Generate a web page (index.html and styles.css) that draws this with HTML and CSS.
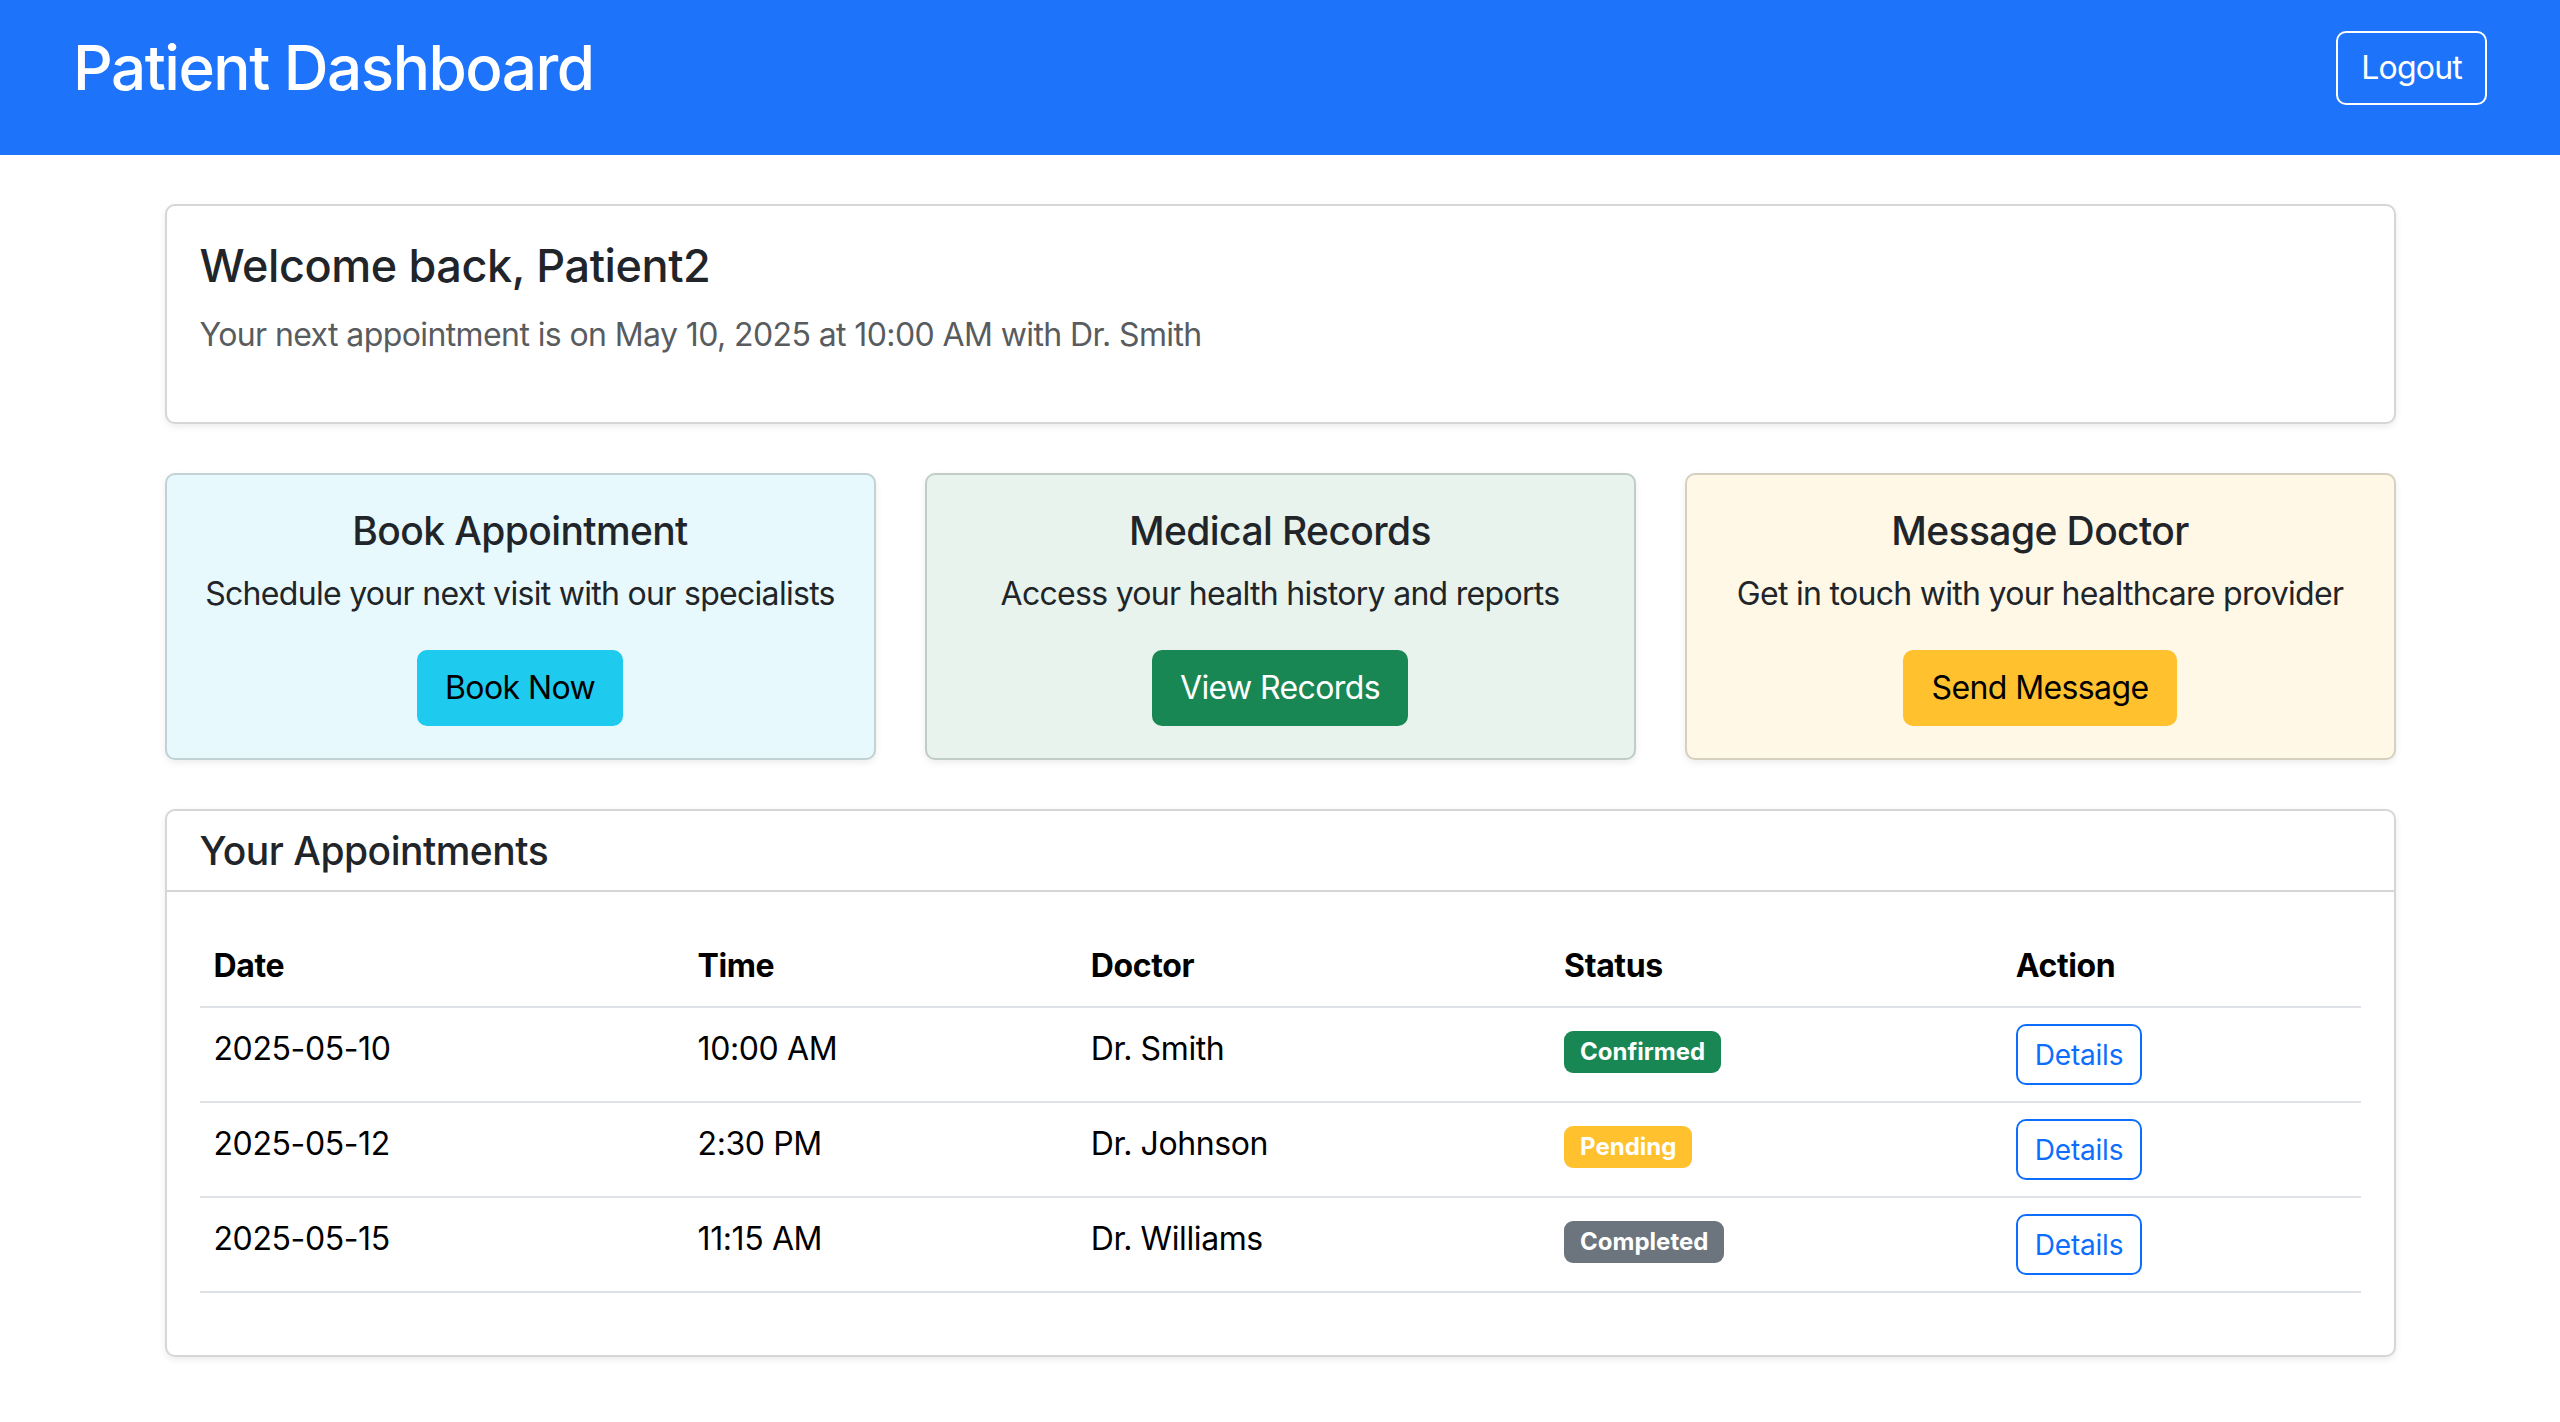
FILE: index.html
```html
<!DOCTYPE html>
<html lang="en">
<head>
<meta charset="utf-8">
<title>Patient Dashboard</title>
<link rel="stylesheet" href="styles.css">
</head>
<body>
<header class="topbar">
  <h1 class="brand">Patient Dashboard</h1>
  <button class="btn-logout" type="button">Logout</button>
</header>

<main class="container">
  <section class="card welcome">
    <h2 class="welcome-title">Welcome back, Patient2</h2>
    <p class="welcome-text">Your next appointment is on May 10, 2025 at 10:00 AM with Dr. Smith</p>
  </section>

  <section class="actions">
    <div class="card action action-info">
      <h4 class="action-title">Book Appointment</h4>
      <p class="action-text">Schedule your next visit with our specialists</p>
      <button class="btn btn-info" type="button">Book Now</button>
    </div>
    <div class="card action action-success">
      <h4 class="action-title">Medical Records</h4>
      <p class="action-text">Access your health history and reports</p>
      <button class="btn btn-success" type="button">View Records</button>
    </div>
    <div class="card action action-warning">
      <h4 class="action-title">Message Doctor</h4>
      <p class="action-text">Get in touch with your healthcare provider</p>
      <button class="btn btn-warning" type="button">Send Message</button>
    </div>
  </section>

  <section class="card appts">
    <div class="appts-header">
      <h3 class="appts-title">Your Appointments</h3>
    </div>
    <div class="appts-body">
      <table class="table">
        <colgroup>
          <col class="col-date">
          <col class="col-time">
          <col class="col-doctor">
          <col class="col-status">
          <col class="col-action">
        </colgroup>
        <thead>
          <tr><th>Date</th><th>Time</th><th>Doctor</th><th>Status</th><th>Action</th></tr>
        </thead>
        <tbody>
          <tr>
            <td>2025-05-10</td><td>10:00 AM</td><td>Dr. Smith</td>
            <td><span class="badge badge-success">Confirmed</span></td>
            <td><button class="btn-details" type="button">Details</button></td>
          </tr>
          <tr>
            <td>2025-05-12</td><td>2:30 PM</td><td>Dr. Johnson</td>
            <td><span class="badge badge-warning">Pending</span></td>
            <td><button class="btn-details" type="button">Details</button></td>
          </tr>
          <tr>
            <td>2025-05-15</td><td>11:15 AM</td><td>Dr. Williams</td>
            <td><span class="badge badge-secondary">Completed</span></td>
            <td><button class="btn-details" type="button">Details</button></td>
          </tr>
        </tbody>
      </table>
    </div>
  </section>
</main>
</body>
</html>
```

FILE: styles.css
```css
* { box-sizing: border-box; }

html, body {
  margin: 0;
  padding: 0;
  background: #ffffff;
}

body {
  font-family: Inter, "Liberation Sans", sans-serif;
  font-size: 26px;
  line-height: 1.5;
  color: #212529;
}

button {
  font-family: inherit;
  cursor: pointer;
}

/* ---------- Top bar ---------- */
.topbar {
  height: 155px;
  background: #1d74fa;
  display: flex;
  align-items: center;
  justify-content: space-between;
  padding: 0 73px 19px 73px;
}

.brand {
  margin: 0;
  color: #ffffff;
  font-size: 62px;
  font-weight: 500;
  line-height: 1.2;
  letter-spacing: -1.5px;
}

.btn-logout {
  height: 74px;
  padding: 0 23px;
  background: transparent;
  color: #ffffff;
  border: 2px solid #ffffff;
  border-radius: 10px;
  font-size: 32px;
  font-weight: 400;
  line-height: 1;
  letter-spacing: -0.8px;
}

/* ---------- Layout ---------- */
.container {
  max-width: 2231px;
  margin: 0 auto;
  padding: 49px 0 60px;
  display: flex;
  flex-direction: column;
  gap: 49px;
}

.card {
  border: 2px solid rgba(0, 0, 0, 0.16);
  border-radius: 10px;
  background: #ffffff;
  box-shadow: 0 3px 7px rgba(0, 0, 0, 0.075);
}

/* ---------- Welcome ---------- */
.welcome {
  padding: 32px 33px 34px;
}

.welcome-title {
  margin: 0 0 17px;
  font-size: 45px;
  font-weight: 500;
  line-height: 55px;
  letter-spacing: -0.4px;
}

.welcome-text {
  margin: 0;
  font-size: 32px;
  line-height: 49px;
  letter-spacing: -0.6px;
  color: #595c5f;
  padding-bottom: 29px;
}

/* ---------- Action cards ---------- */
.actions {
  display: grid;
  grid-template-columns: repeat(3, 1fr);
  gap: 49px;
}

.action {
  padding: 32px 20px 32px;
  text-align: center;
  display: flex;
  flex-direction: column;
  align-items: center;
}

.action-info { background: #e7f9fd; }
.action-success { background: #e8f3ed; }
.action-warning { background: #fff8e6; }

.action-title {
  margin: 0 0 15px;
  font-size: 39px;
  font-weight: 500;
  line-height: 47px;
  letter-spacing: -0.6px;
}

.action-text {
  margin: 0 0 32px;
  font-size: 32px;
  line-height: 49px;
  letter-spacing: -0.7px;
  white-space: nowrap;
}

.btn {
  height: 76px;
  padding: 0 26px;
  border-radius: 10px;
  border: 2px solid transparent;
  font-size: 32px;
  line-height: 1;
  letter-spacing: -0.6px;
  display: inline-flex;
  align-items: center;
  justify-content: center;
}

.btn-info { background: #1ecbee; border-color: #1ecbee; color: #000000; }
.btn-success { background: #198754; border-color: #198754; color: #ffffff; }
.btn-warning { background: #ffc12e; border-color: #ffc12e; color: #000000; }

/* ---------- Appointments ---------- */
.appts-header {
  padding: 12px 33px;
  border-bottom: 2px solid rgba(0, 0, 0, 0.16);
}

.appts-title {
  margin: 0;
  font-size: 39px;
  font-weight: 500;
  line-height: 55px;
  letter-spacing: -0.5px;
}

.appts-body {
  padding: 33px 33px 31px;
}

.table {
  width: 100%;
  border-collapse: collapse;
  table-layout: fixed;
  color: #000000;
  font-size: 32px;
  line-height: 49px;
  letter-spacing: -0.4px;
  margin-bottom: 31px;
}

.col-date { width: 22.4%; }
.col-time { width: 18.2%; }
.col-doctor { width: 21.9%; }
.col-status { width: 20.9%; }
.col-action { width: 16.6%; }

.table th,
.table td {
  padding: 16px 14px;
  text-align: left;
  vertical-align: top;
  border-bottom: 2px solid #dee2e6;
}

.table th {
  font-weight: 700;
}

.badge {
  display: inline-block;
  padding: 9px 16px;
  font-size: 24px;
  font-weight: 700;
  line-height: 1;
  letter-spacing: 0;
  color: #ffffff;
  border-radius: 9px;
  white-space: nowrap;
}

.badge-success { background: #198754; }
.badge-warning { background: #ffc12e; }
.badge-secondary { background: #6c757d; }

.btn-details {
  height: 61px;
  padding: 0 17px;
  background: #ffffff;
  color: #0d6efd;
  border: 2px solid #0d6efd;
  border-radius: 10px;
  font-size: 28px;
  line-height: 1;
  letter-spacing: -0.2px;
  display: inline-flex;
  align-items: center;
}
```
